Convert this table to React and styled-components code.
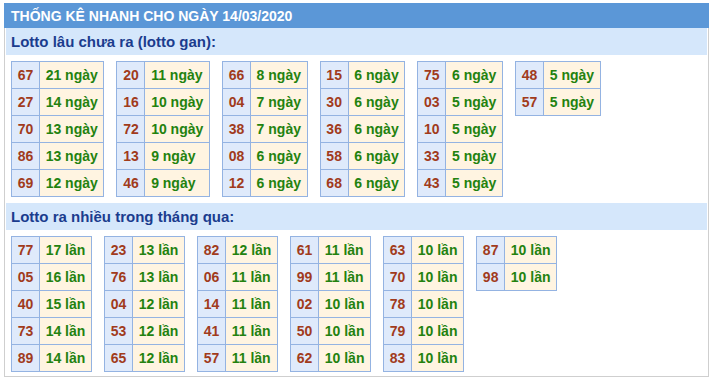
import React from "react";
import styled, { createGlobalStyle } from "styled-components";

const Global = createGlobalStyle`
  html, body { margin: 0; padding: 0; background: #ffffff; }
  body { font-family: "Liberation Sans", Arial, sans-serif; }
`;

const Box = styled.div`
  margin: 3px 0 0 4px;
  width: 705px;
  box-sizing: border-box;
  border: 1px solid #cfcfcf;
  border-top: none;
  padding-bottom: 4px;
`;

const Header = styled.div`
  margin: 0 -1px;
  height: 25px;
  background: #5b97d7;
  color: #ffffff;
  font-weight: bold;
  font-size: 14px;
  line-height: 26px;
  padding-left: 7px;
`;

const SubHeader = styled.div`
  margin: ${(p) => p.$top}px 1px 0 1px;
  height: 27px;
  background: #d5e7fb;
  color: #1b3c8e;
  font-weight: bold;
  font-size: 15px;
  line-height: 27px;
  padding-left: 5px;
`;

const Grid = styled.div`
  display: flex;
  align-items: flex-start;
  gap: 12px;
  padding: 6px 0 0 6px;
`;

const Table = styled.table`
  border-collapse: collapse;
  font-size: 14px;
  font-weight: bold;
`;

const Cell = styled.td`
  border: 1px solid #94b3e2;
  padding: 0 5.7px;
  line-height: 26px;
  height: 26px;
  white-space: nowrap;
  background: ${(p) => (p.$num ? "#dfeafb" : "#fff4e1")};
  color: ${(p) => (p.$num ? "#a13b1c" : "#23820f")};
  text-align: left;
`;

const gan = [
  [["67", 21], ["27", 14], ["70", 13], ["86", 13], ["69", 12]],
  [["20", 11], ["16", 10], ["72", 10], ["13", 9], ["46", 9]],
  [["66", 8], ["04", 7], ["38", 7], ["08", 6], ["12", 6]],
  [["15", 6], ["30", 6], ["36", 6], ["58", 6], ["68", 6]],
  [["75", 6], ["03", 5], ["10", 5], ["33", 5], ["43", 5]],
  [["48", 5], ["57", 5]],
];

const nhieu = [
  [["77", 17], ["05", 16], ["40", 15], ["73", 14], ["89", 14]],
  [["23", 13], ["76", 13], ["04", 12], ["53", 12], ["65", 12]],
  [["82", 12], ["06", 11], ["14", 11], ["41", 11], ["57", 11]],
  [["61", 11], ["99", 11], ["02", 10], ["50", 10], ["62", 10]],
  [["63", 10], ["70", 10], ["78", 10], ["79", 10], ["83", 10]],
  [["87", 10], ["98", 10]],
];

function Group({ data, unit }) {
  return (
    <Grid>
      {data.map((rows, i) => (
        <Table key={i}>
          <tbody>
            {rows.map(([n, c]) => (
              <tr key={n}>
                <Cell $num>{n}</Cell>
                <Cell>{c} {unit}</Cell>
              </tr>
            ))}
          </tbody>
        </Table>
      ))}
    </Grid>
  );
}

export default function App() {
  return (
    <>
      <Global />
      <Box>
        <Header>THỐNG KÊ NHANH CHO NGÀY 14/03/2020</Header>
        <SubHeader $top={0}>Lotto lâu chưa ra (lotto gan):</SubHeader>
        <Group data={gan} unit="ngày" />
        <SubHeader $top={6}>Lotto ra nhiều trong tháng qua:</SubHeader>
        <Group data={nhieu} unit="lần" />
      </Box>
    </>
  );
}
